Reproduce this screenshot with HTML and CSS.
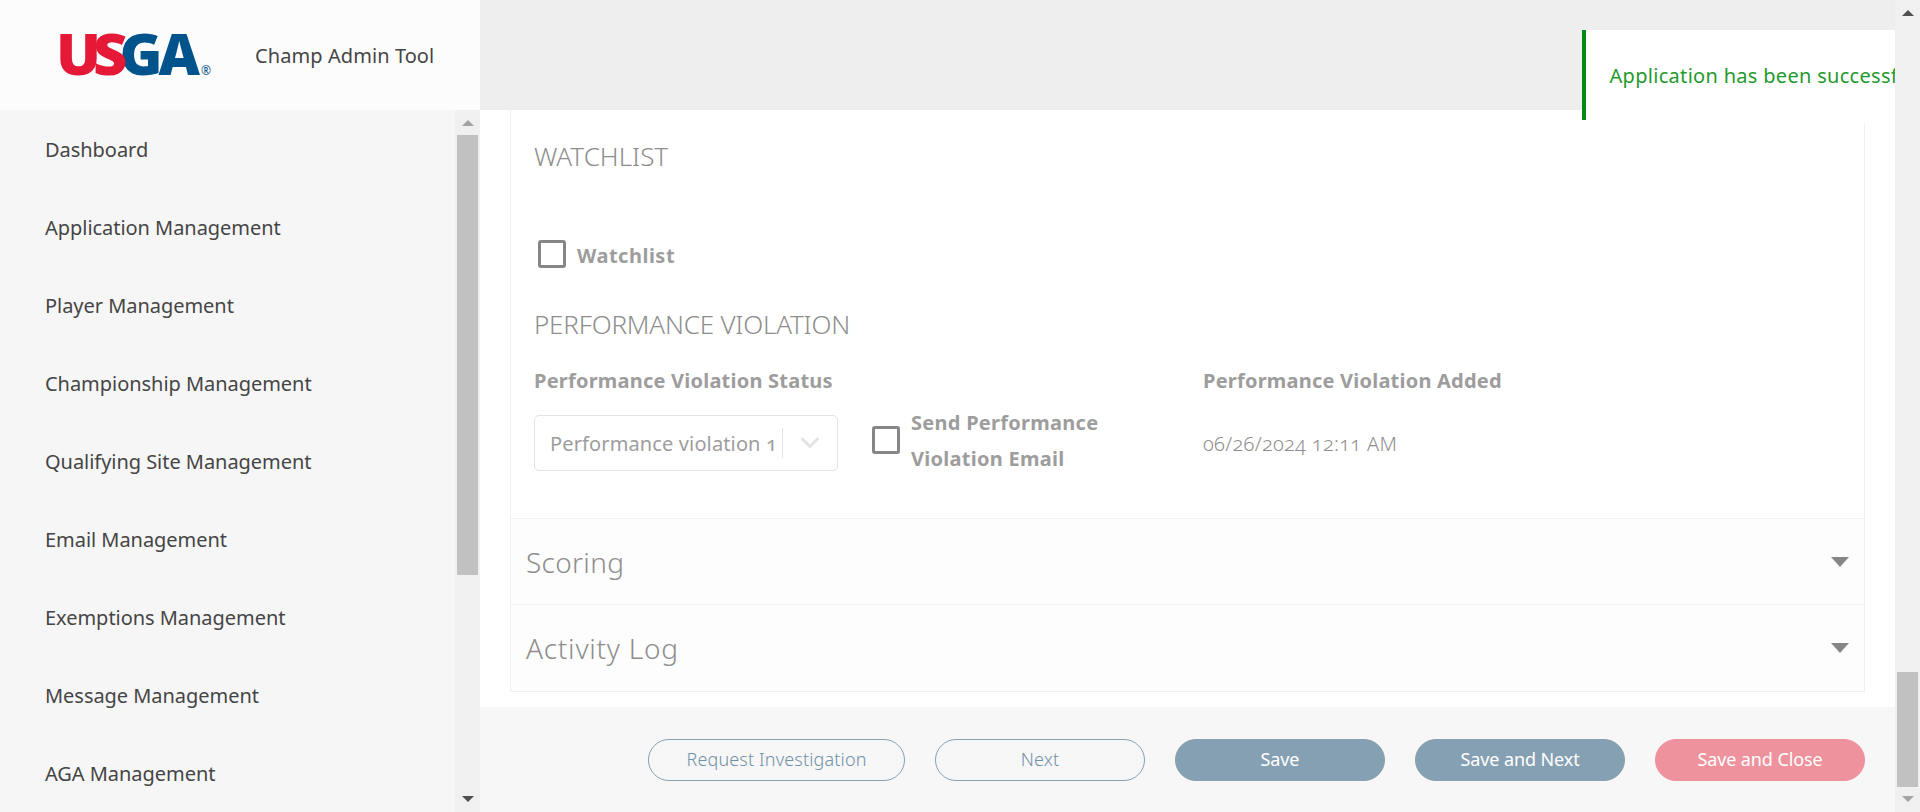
FILE: index.html
```html
<!DOCTYPE html>
<html lang="en">
<head>
<meta charset="utf-8">
<title>Champ Admin Tool</title>
<link rel="stylesheet" href="styles.css">
</head>
<body>
<div class="app">
  <div class="left">
    <header class="brand">
      <svg class="logo" width="152" height="46" viewBox="0 0 152 46" role="img" aria-label="USGA">
        <g class="logo-letters">
          <text class="blue" x="59.500" y="43" textLength="43" lengthAdjust="spacingAndGlyphs">G</text>
          <text class="blue" x="98.500" y="43" textLength="41.500" lengthAdjust="spacingAndGlyphs">A</text>
          <text class="red" x="-4" y="43" textLength="45" lengthAdjust="spacingAndGlyphs">U</text>
          <text class="red" x="33" y="43" textLength="34.500" lengthAdjust="spacingAndGlyphs">S</text>
        </g>
        <text class="reg" x="141" y="43">®</text>
      </svg>
      <span class="product">Champ Admin Tool</span>
    </header>
    <div class="side">
      <nav class="nav">
        <a>Dashboard</a>
        <a>Application Management</a>
        <a>Player Management</a>
        <a>Championship Management</a>
        <a>Qualifying Site Management</a>
        <a>Email Management</a>
        <a>Exemptions Management</a>
        <a>Message Management</a>
        <a>AGA Management</a>
      </nav>
      <div class="bar">
        <svg class="arrow dim" width="12" height="6" viewBox="0 0 12 6"><path d="M0 6 6 0l6 6z"/></svg>
        <div class="thumb side-thumb"></div>
        <svg class="arrow" width="12" height="6" viewBox="0 0 12 6"><path d="M0 0h12L6 6z"/></svg>
      </div>
    </div>
  </div>
  <main class="main">
    <div class="topbar"></div>
    <div class="content">
      <div class="card">
        <section class="panel">
          <h2 class="h-watch">WATCHLIST</h2>
          <label class="check watch"><i class="box"></i><b>Watchlist</b></label>
          <h2 class="h-perf">PERFORMANCE VIOLATION</h2>
          <div class="cols">
            <div class="col-a">
              <b class="lbl">Performance Violation Status</b>
              <div class="row">
                <div class="select">
                  <span class="val">Performance violation 1</span>
                  <span class="sep"></span>
                  <svg class="chev" width="20" height="12" viewBox="0 0 20 12"><path d="M2.500 2 10 9.500 17.500 2"/></svg>
                </div>
                <label class="check send"><i class="box"></i><b>Send Performance<br>Violation Email</b></label>
              </div>
            </div>
            <div class="col-b">
              <b class="lbl">Performance Violation Added</b>
              <div class="date">06/26/2024 12:11 AM</div>
            </div>
          </div>
        </section>
        <div class="acc"><span>Scoring</span><svg width="18" height="10" viewBox="0 0 18 10"><path d="M0 0h18L9 10z"/></svg></div>
        <div class="acc log"><span>Activity Log</span><svg width="18" height="10" viewBox="0 0 18 10"><path d="M0 0h18L9 10z"/></svg></div>
      </div>
    </div>
    <footer class="actions">
      <button class="btn wide line">Request Investigation</button>
      <button class="btn line">Next</button>
      <button class="btn fill">Save</button>
      <button class="btn fill">Save and Next</button>
      <button class="btn danger">Save and Close</button>
    </footer>
    <div class="toast">Application has been successfully</div>
  </main>
  <div class="bar page-bar">
    <svg class="arrow" width="12" height="6" viewBox="0 0 12 6"><path d="M0 6 6 0l6 6z"/></svg>
    <div class="thumb page-thumb"></div>
    <svg class="arrow dim" width="12" height="6" viewBox="0 0 12 6"><path d="M0 0h12L6 6z"/></svg>
  </div>
</div>
</body>
</html>
```
FILE: styles.css
```css
* { box-sizing: border-box; }
body { margin: 0; height: 812px; overflow: hidden; background: #fff; font: 400 20px/30px "Noto Sans", "Open Sans", sans-serif; color: #454545; font-variant-numeric: oldstyle-nums; }
.app { display: flex; height: 812px; }
.left { width: 480px; display: flex; flex-direction: column; }
.brand { height: 110px; background: #fcfcfc; display: flex; align-items: center; padding-left: 60px; }
.logo { overflow: visible; margin-right: 43px; }
.logo-letters text { font: 800 57px "Open Sans", sans-serif; }
.red { fill: #e51937; }
.blue { fill: #00538b; }
.reg { font: 400 12px "Noto Sans", sans-serif; fill: #00538b; }
.product { padding-top: 2px; letter-spacing: 0.08px; }
.side { flex: 1; display: flex; min-height: 0; background: #f6f6f6; }
.nav { flex: 1; padding: 1px 0 0 45px; overflow: hidden; letter-spacing: -0.04px; }
.nav a { display: flex; align-items: center; height: 78px; }
.bar { width: 25px; background: #f0f0f0; display: flex; flex-direction: column; align-items: center; padding: 10px 0; }
.arrow { fill: #505050; flex: none; }
.arrow.dim { fill: #a3a3a3; }
.thumb { width: 21px; background: #c1c1c1; }
.side-thumb { height: 440px; margin: 9px 0 auto; }
.page-thumb { height: 115px; margin: auto 0 9px; }
.main { position: relative; width: 1415px; overflow: hidden; display: flex; flex-direction: column; }
.topbar { height: 110px; background: #eee; }
.content { height: 597px; padding: 0 30px 15px; color: #9d9d9d; }
.card { height: 582px; border: 1px solid #f0f0f0; border-top: 0; }
.panel { height: 408px; padding: 30px 23px 0; }
h2 { margin: 0; font-size: 26px; font-weight: 300; line-height: 32px; color: #8e8e8e; }
.check { display: flex; align-items: center; }
.watch { margin: 67px 0 0 4px; height: 30px; letter-spacing: 0.5px; }
.watch b { padding-top: 3px; }
.box { width: 28px; height: 28px; border: 3px solid #868686; border-radius: 3px; flex: none; margin-right: 11px; }
b { font-weight: 700; }
.h-perf { margin-top: 39px; letter-spacing: -0.2px; }
.cols { display: flex; margin-top: 26px; }
.col-a { width: 669px; }
.lbl { display: block; line-height: 30px; letter-spacing: 0.22px; }
.row { display: flex; align-items: flex-start; margin-top: 14px; }
.select { width: 304px; height: 56px; margin-top: 5px; border: 1px solid #e2e2e2; border-radius: 5px; display: flex; align-items: center; padding: 0 17px 0 15px; }
.val { width: 232px; padding-top: 2px; white-space: nowrap; letter-spacing: 0.13px; }
.sep { width: 1px; height: 30px; background: #e3e3e3; }
.chev { margin-left: auto; fill: none; stroke: #e3e3e3; stroke-width: 3; stroke-linecap: round; }
.send { margin: -5px 0 0 34px; line-height: 36px; letter-spacing: 0.27px; }
.send .box { margin-bottom: 3px; }
.date { margin-top: 33px; font-weight: 300; color: #8e8e8e; letter-spacing: 0.33px; }
.acc { height: 86px; border-top: 1px solid #f0f0f0; background: #fdfdfd; display: flex; align-items: center; justify-content: space-between; padding: 0 15px; font-size: 28px; font-weight: 300; color: #8e8e8e; letter-spacing: 0.3px; }
.log { height: 87px; letter-spacing: 0.75px; }
.acc svg { fill: #868686; }
.actions { flex: 1; background: #f7f7f7; display: flex; justify-content: flex-end; gap: 30px; padding: 32px 30px 0; }
.btn { width: 210px; height: 42px; padding: 0 0 1px; border: 1px solid #86a0b3; border-radius: 21px; font: 400 18px/39px "Noto Sans", sans-serif; color: #fff; letter-spacing: -0.1px; }
.wide { width: 257px; }
.line { background: transparent; color: #7090a6; font-weight: 300; letter-spacing: 0.15px; }
.fill { background: #86a0b3; }
.danger { background: #ee929d; border-color: #ee929d; }
.toast { position: absolute; left: 1101.5px; top: 30px; width: 420px; height: 90px; padding: 2px 0 0 24px; border-left: 4px solid #028b12; background: #fff; box-shadow: 0 3px #fff; color: #1f9a2d; display: flex; align-items: center; white-space: nowrap; letter-spacing: 0.3px; }
```
